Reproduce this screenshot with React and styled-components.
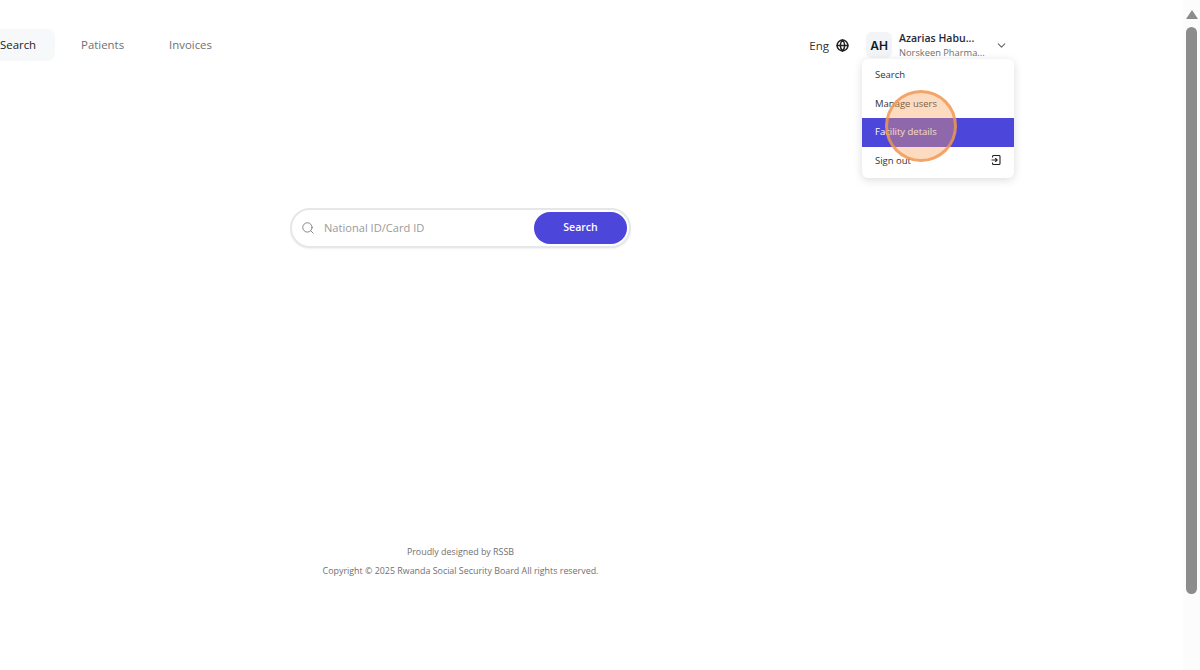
import React from "react";
import styled, { createGlobalStyle } from "styled-components";
import { Search, ChevronDown, Globe } from "lucide-react";

const GlobalStyle = createGlobalStyle`
    html, body {
        margin: 0;
        padding: 0;
        height: 100%;
        overflow: hidden;
        background-color: #FFFFFF;
        font-family: "Open Sans", "Noto Sans", sans-serif;
    }
    * {
        box-sizing: border-box;
    }
`

const tabs = [
    { label: "Search", active: true },
    { label: "Patients" },
    { label: "Invoices" },
]

const menuItems = [
    { label: "Search" },
    { label: "Manage users" },
    { label: "Facility details", active: true },
    { label: "Sign out", icon: true },
]

function SignOutIcon() {
    return (
        <svg width="10" height="10" viewBox="0 0 10 10" fill="none" stroke="#222222" strokeWidth="1.1">
            <path d="M1.5 2.5V1.5a1 1 0 0 1 1-1h5.5a1 1 0 0 1 1 1v7a1 1 0 0 1-1 1H2.5a1 1 0 0 1-1-1v-1" />
            <path d="M0.5 5h5.5M4.2 3.2 6.2 5 4.2 6.8" />
        </svg>
    )
}

export default function App() {
    return (
        <Page>
            <GlobalStyle />
            <Main>
                <Header>
                    <Tabs>
                        {tabs.map((tab) => (
                            <Tab key={tab.label} $active={tab.active}>{tab.label}</Tab>
                        ))}
                    </Tabs>
                    <Account>
                        <Language>
                            Eng
                            <Globe size={13} strokeWidth={2.8} color="#222222" />
                        </Language>
                        <User>
                            <Avatar>AH</Avatar>
                            <UserText>
                                <UserName>Azarias Habu...</UserName>
                                <UserCompany>Norskeen Pharma...</UserCompany>
                            </UserText>
                            <ChevronDown size={13} color="#666666" />
                            <Menu>
                                {menuItems.map((item) => (
                                    <MenuItem key={item.label} $active={item.active}>
                                        {item.label}
                                        {item.icon && <SignOutIcon />}
                                    </MenuItem>
                                ))}
                                <Highlight />
                            </Menu>
                        </User>
                    </Account>
                </Header>
                <Body>
                    <SearchBar>
                        <Search size={14} color="#777777" strokeWidth={1.5} />
                        <SearchInput placeholder="National ID/Card ID" />
                        <SearchButton>Search</SearchButton>
                    </SearchBar>
                    <Footer>
                        <p>Proudly designed by RSSB</p>
                        <p>Copyright © 2025 Rwanda Social Security Board All rights reserved.</p>
                    </Footer>
                </Body>
            </Main>
            <Scrollbar>
                <ScrollArrow />
                <ScrollThumb />
            </Scrollbar>
        </Page>
    )
}

const Page = styled.div`
    display: flex;
    width: 100vw;
    height: 100vh;
    overflow: hidden;
`

const Main = styled.div`
    flex: 1;
    display: flex;
    flex-direction: column;
    min-width: 0;
`

const Header = styled.div`
    width: 1014px;
    height: 208px;
    flex-shrink: 0;
    display: flex;
    justify-content: space-between;
    align-items: flex-start;
    padding-top: 29px;
    padding-right: 6px;
`

const Tabs = styled.div`
    display: flex;
    gap: 7px;
    margin-left: -19px;
`

const Tab = styled.div`
    height: 32px;
    padding: 0 19px 2px;
    display: flex;
    align-items: center;
    border-radius: 8px;
    font-size: 11.4px;
    color: ${(props) => (props.$active ? "#222222" : "#707070")};
    background-color: ${(props) => (props.$active ? "#F6F8FA" : "transparent")};
`

const Account = styled.div`
    display: flex;
    align-items: flex-start;
    gap: 17px;
`

const Language = styled.div`
    height: 32px;
    display: flex;
    align-items: center;
    gap: 7px;
    font-size: 11.5px;
    color: #333333;
`

const User = styled.div`
    position: relative;
    display: flex;
    align-items: center;
    height: 32px;
`

const Avatar = styled.div`
    width: 26px;
    height: 26px;
    margin-right: 7px;
    display: flex;
    align-items: center;
    justify-content: center;
    border-radius: 6px;
    background-color: #F3F4F6;
    font-family: "Inter", sans-serif;
    font-size: 12px;
    font-weight: 600;
    color: #111827;
`

const UserText = styled.div`
    width: 96px;
    display: flex;
    flex-direction: column;
    gap: 1px;
`

const UserName = styled.div`
    font-size: 10.5px;
    font-weight: 600;
    line-height: 14px;
    color: #1F2937;
`

const UserCompany = styled.div`
    font-size: 9.3px;
    line-height: 13px;
    color: #707070;
    white-space: nowrap;
`

const Menu = styled.div`
    position: absolute;
    top: 30px;
    left: -4px;
    width: 152px;
    padding: 2px 0 3px;
    border-radius: 6px;
    background-color: #FFFFFF;
    box-shadow: 0 2px 10px rgba(0, 0, 0, 0.14);
`

const MenuItem = styled.div`
    height: 28.5px;
    padding: 0 13px 1px;
    display: flex;
    align-items: center;
    justify-content: space-between;
    font-size: 9.5px;
    color: ${(props) => (props.$active ? "#FFFFFF" : "#333333")};
    background-color: ${(props) => (props.$active ? "#4C46DB" : "transparent")};
`

const Highlight = styled.div`
    position: absolute;
    left: 23px;
    top: 31px;
    width: 72px;
    height: 72px;
    border-radius: 50%;
    border: 3px solid rgba(240, 150, 80, 0.8);
    background-color: rgba(250, 160, 90, 0.38);
`

const Body = styled.div`
    width: 921px;
    flex: 1;
    display: flex;
    flex-direction: column;
    align-items: center;
`

const SearchBar = styled.div`
    width: 341px;
    height: 40px;
    padding: 0 2px 0 9px;
    display: flex;
    align-items: center;
    border: 2px solid #E5E7EB;
    border-radius: 20px;
    background-color: #FFFFFF;
    box-shadow: 0 1px 2px rgba(0, 0, 0, 0.06);
`

const SearchInput = styled.input`
    flex: 1;
    min-width: 0;
    margin-left: 9px;
    padding: 0 0 2px;
    border: none;
    outline: none;
    background: transparent;
    font-family: inherit;
    font-size: 11.1px;
    color: #222222;

    &::placeholder {
        color: #9A9A9A;
    }
`

const SearchButton = styled.button`
    width: 93px;
    height: 32px;
    padding: 0 0 2px;
    border: none;
    border-radius: 16px;
    background-color: #4C46DB;
    font-family: inherit;
    font-size: 10.5px;
    font-weight: 600;
    color: #FFFFFF;
`

const Footer = styled.div`
    margin-top: 294px;
    text-align: center;
    font-size: 8.9px;
    color: #707070;

    p {
        margin: 0;
        line-height: 19px;
    }
`

const Scrollbar = styled.div`
    width: 17px;
    flex-shrink: 0;
    display: flex;
    flex-direction: column;
    align-items: center;
    padding-top: 10px;
    background-color: #FCFCFC;
`

const ScrollArrow = styled.div`
    width: 0;
    height: 0;
    border-left: 6px solid transparent;
    border-right: 6px solid transparent;
    border-bottom: 9px solid #8C8C8C;
`

const ScrollThumb = styled.div`
    width: 11px;
    height: 567px;
    margin-top: 8px;
    border-radius: 6px;
    background-color: #8C8C8C;
`
